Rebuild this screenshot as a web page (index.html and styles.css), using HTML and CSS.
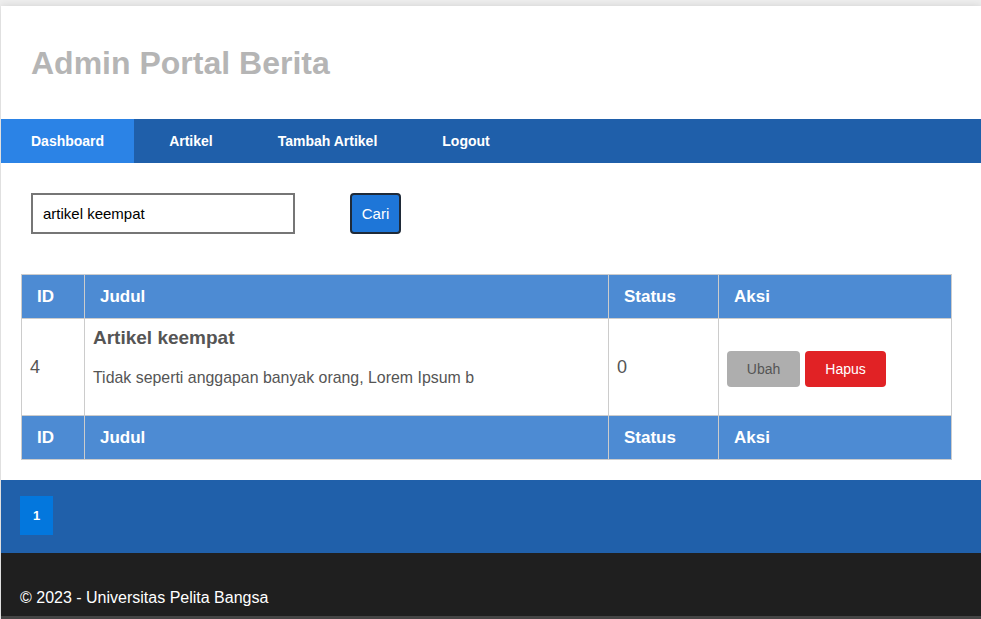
FILE: index.html
```html
<!DOCTYPE html>
<html lang="id">
<head>
<meta charset="utf-8">
<title>Admin Portal Berita</title>
<link rel="stylesheet" href="styles.css">
</head>
<body>
<div class="wrap">
  <header class="header">
    <h1 class="title">Admin Portal Berita</h1>
  </header>
  <nav class="nav">
    <a class="nav-item active" href="#">Dashboard</a>
    <a class="nav-item" href="#">Artikel</a>
    <a class="nav-item" href="#">Tambah Artikel</a>
    <a class="nav-item" href="#">Logout</a>
  </nav>
  <main class="content">
    <form class="search">
      <input class="search-input" type="text" value="artikel keempat">
      <button class="search-btn" type="button">Cari</button>
    </form>
    <table class="table">
      <colgroup>
        <col class="c-id"><col class="c-judul"><col class="c-status"><col class="c-aksi">
      </colgroup>
      <thead>
        <tr><th>ID</th><th>Judul</th><th>Status</th><th>Aksi</th></tr>
      </thead>
      <tbody>
        <tr>
          <td class="num">4</td>
          <td>
            <div class="art-title">Artikel keempat</div>
            <div class="art-desc">Tidak seperti anggapan banyak orang, Lorem Ipsum b</div>
          </td>
          <td class="num">0</td>
          <td>
            <div class="actions">
              <a class="btn btn-edit" href="#">Ubah</a>
              <a class="btn btn-del" href="#">Hapus</a>
            </div>
          </td>
        </tr>
      </tbody>
      <tfoot>
        <tr><th>ID</th><th>Judul</th><th>Status</th><th>Aksi</th></tr>
      </tfoot>
    </table>
  </main>
  <div class="pager">
    <a class="page active" href="#">1</a>
  </div>
  <footer class="footer">© 2023 - Universitas Pelita Bangsa</footer>
</div>
</body>
</html>
```
FILE: styles.css
```css
html, body {
  margin: 0;
  padding: 0;
}
body {
  background: #eeeeee;
  font-family: "Liberation Sans", Arial, sans-serif;
  padding-top: 6px;
  overflow: hidden;
}
.wrap {
  margin-left: 1px;
  width: 980px;
  background: #fff;
  box-shadow: 0 0 8px rgba(0,0,0,0.12);
}
.header {
  height: 113px;
  display: flex;
  align-items: center;
  padding-left: 30px;
}
.title {
  margin: 0;
  font-size: 32px;
  font-weight: bold;
  color: #b5b5b5;
  line-height: 1;
}
.nav {
  display: flex;
  background: #1f5faa;
  height: 44px;
  gap: 4px;
}
.nav-item {
  display: flex;
  align-items: center;
  padding: 0 30px;
  color: #fff;
  font-weight: bold;
  font-size: 14px;
  text-decoration: none;
}
.nav-item + .nav-item {
  margin-left: 1px;
}
.nav-item.active {
  background: #2b83e6;
}
.content {
  padding: 30px 20px 20px;
}
.search {
  display: flex;
  padding-left: 10px;
  margin: 0 0 40px;
}
.search-input {
  width: 264px;
  height: 41px;
  box-sizing: border-box;
  border: 2px solid #767676;
  padding: 0 10px;
  font-family: "Liberation Sans", Arial, sans-serif;
  font-size: 15px;
  color: #000;
  margin: 0;
}
.search-btn {
  margin-left: 55px;
  width: 51px;
  height: 41px;
  box-sizing: border-box;
  background: #1e76d8;
  border: 2px solid #1f2a38;
  border-radius: 4px;
  color: #fff;
  font-family: "Liberation Sans", Arial, sans-serif;
  font-size: 15px;
  padding: 0;
}
.table {
  width: 930px;
  table-layout: fixed;
  border-collapse: collapse;
}
.c-id { width: 63px; }
.c-judul { width: 524px; }
.c-status { width: 110px; }
.c-aksi { width: 233px; }
.table th, .table td {
  border: 1px solid #cccccc;
}
.table th {
  background: #4d8bd3;
  color: #fff;
  font-size: 17px;
  font-weight: bold;
  text-align: left;
  padding: 0 15px;
  height: 43px;
  line-height: 20px;
}
.table td {
  padding: 8px;
  vertical-align: middle;
  color: #555;
}
.table td.num {
  font-size: 18px;
}
.art-title {
  font-size: 19px;
  font-weight: bold;
  line-height: 22px;
  margin: 0 0 20px;
}
.art-desc {
  font-size: 15.9px;
  line-height: 18px;
  margin-bottom: 20px;
}
.actions {
  display: flex;
  gap: 5px;
  position: relative;
  top: 2px;
}
.btn {
  display: flex;
  align-items: center;
  justify-content: center;
  height: 36px;
  border-radius: 4px;
  font-size: 14px;
  text-decoration: none;
}
.btn-edit {
  width: 73px;
  background: #aeaeae;
  color: #555;
}
.btn-del {
  width: 81px;
  background: #e12225;
  color: #fff;
}
.pager {
  background: #2060aa;
  padding: 16px 19px 18px;
  display: flex;
}
.page {
  display: flex;
  align-items: center;
  justify-content: center;
  width: 33px;
  height: 39px;
  background: #0377dd;
  color: #fff;
  font-weight: bold;
  font-size: 13px;
  text-decoration: none;
}
.footer {
  background: #1f1f1f;
  color: #fff;
  font-size: 16px;
  line-height: 19px;
  padding: 35px 19px 9px;
  border-bottom: 3px solid #454545;
}
```
